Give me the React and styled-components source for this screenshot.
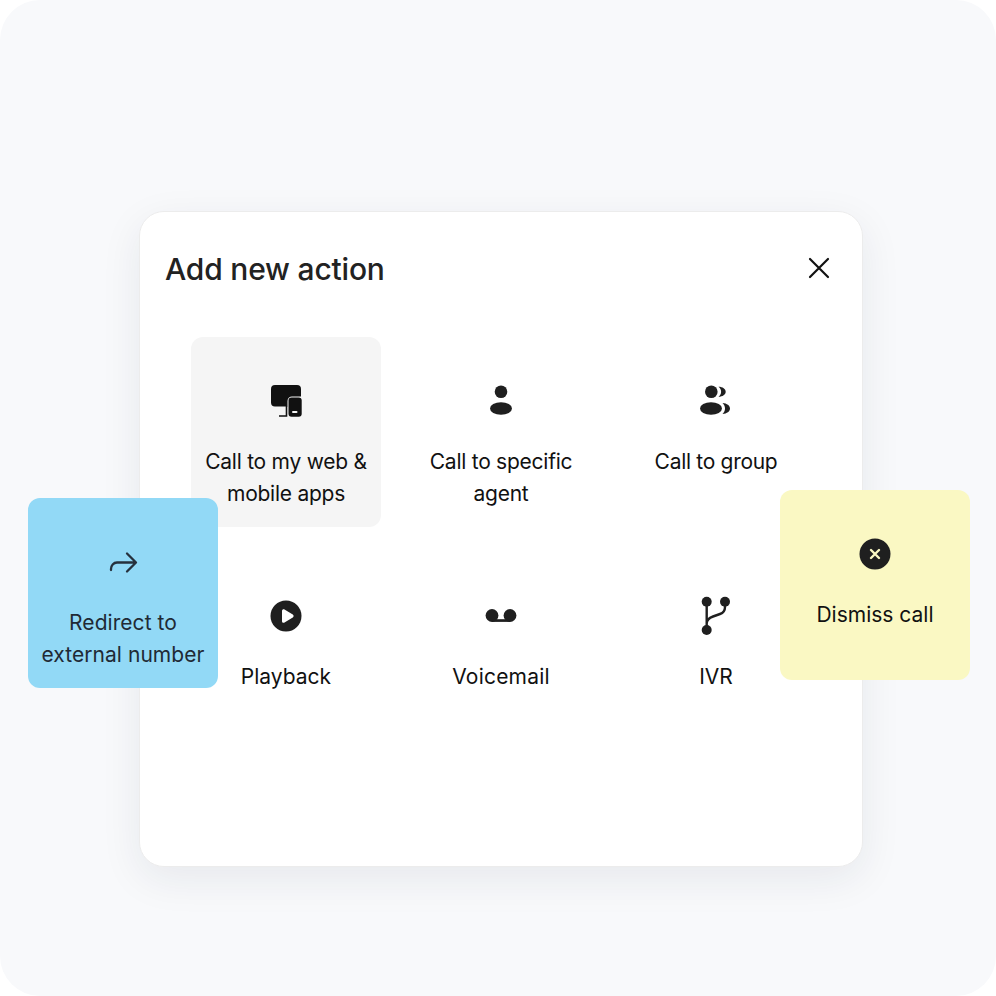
import React from "react";
import styled, { createGlobalStyle } from "styled-components";

const GlobalStyle = createGlobalStyle`
  html, body {
    margin: 0;
    padding: 0;
    background: #ffffff;
  }
  body {
    font-family: Inter, "Liberation Sans", sans-serif;
    color: #1f1f1f;
  }
`;

const Canvas = styled.div`
  position: relative;
  box-sizing: border-box;
  width: 996px;
  height: 996px;
  padding: 211px 133px 129px 139px;
  background: #f8f9fb;
  border-radius: 40px;
  overflow: hidden;
`;

const Modal = styled.div`
  box-sizing: border-box;
  width: 724px;
  height: 656px;
  padding: 37px 24px 0 25px;
  background: #ffffff;
  border: 1px solid #ececec;
  border-radius: 25px;
  box-shadow: 0 12px 40px rgba(30, 40, 60, 0.08);
`;

const Header = styled.div`
  display: flex;
  align-items: center;
  justify-content: space-between;
  height: 40px;
  padding-right: 3px;
`;

const Title = styled.h2`
  margin: 0;
  font-size: 30px;
  font-weight: 500;
  letter-spacing: -0.2px;
  color: #222222;
`;

const CloseButton = styled.button`
  display: flex;
  margin-bottom: 2px;
  padding: 0;
  border: 0;
  background: none;
  color: #111111;
`;

const ActionGrid = styled.div`
  display: grid;
  grid-template-columns: repeat(3, 190px);
  grid-auto-rows: 190px;
  column-gap: 25px;
  row-gap: 24px;
  margin: 48px 0 0 26px;
`;

const Tile = styled.div`
  box-sizing: border-box;
  display: flex;
  flex-direction: column;
  align-items: center;
  width: 190px;
  height: 190px;
  padding: ${(p) => p.$top || 48}px 8px 0;
  background: ${(p) => p.$bg || "transparent"};
  border-radius: 12px;
`;

const FloatingTile = styled(Tile)`
  position: absolute;
  left: ${(p) => p.$x}px;
  top: ${(p) => p.$y}px;
`;

const IconSlot = styled.div`
  display: flex;
  align-items: center;
  justify-content: center;
  width: 32px;
  height: 32px;
  color: ${(p) => p.$color || "#1f1f1f"};
`;

const Label = styled.div`
  margin-top: 29px;
  font-size: 21px;
  line-height: 32px;
  letter-spacing: ${(p) => p.$spacing || 0}px;
  text-align: center;
  white-space: nowrap;
  color: ${(p) => p.$color || "#111111"};
`;

const DevicesIcon = () => (
  <svg width="32" height="32" viewBox="0 0 32 32" fill="none">
    <path d="M1 4a4 4 0 0 1 4-4h22a4 4 0 0 1 4 4v7.500h-9a4.500 4.500 0 0 0-4.500 4.500v5.500H5a4 4 0 0 1-4-4z" fill="#111" />
    <path d="M16.500 21v10H9" stroke="#111" strokeWidth="1.600" />
    <rect x="18.500" y="12.500" width="13.200" height="19.200" rx="3" fill="#111" />
    <rect x="22" y="26" width="5.500" height="2" rx="1" fill="#f5f5f5" />
  </svg>
);

const AgentIcon = () => (
  <svg width="32" height="32" viewBox="0 0 32 32">
    <circle cx="16" cy="6.800" r="6.300" fill="currentColor" />
    <ellipse cx="16" cy="23.500" rx="11" ry="6.200" fill="currentColor" />
  </svg>
);

const GroupIcon = () => (
  <svg width="32" height="32" viewBox="0 0 32 32">
    <circle cx="11.300" cy="6.800" r="6.300" fill="currentColor" />
    <ellipse cx="11" cy="23.500" rx="11" ry="6.200" fill="currentColor" />
    <path d="M18.500 1.700c4.200 0 7.200 2.200 7.200 5s-3 5-7.200 5c1.700-1.400 2.600-3.100 2.600-5s-.9-3.600-2.600-5z" fill="currentColor" />
    <path d="M22.500 18c4.500.3 7.500 2.700 7.500 5.500s-3 5.200-7.500 5.500c1.600-1.500 2.500-3.400 2.500-5.500s-.9-4-2.500-5.500z" fill="currentColor" />
  </svg>
);

const PlayIcon = () => (
  <svg width="32" height="32" viewBox="0 0 32 32">
    <circle cx="16" cy="16" r="15.500" fill="currentColor" />
    <path d="M12 10.800c0-1.300 1.400-2 2.500-1.400l8.300 5.200c1.100.7 1.100 2.200 0 2.800l-8.300 5.200c-1.100.6-2.500-.1-2.500-1.400z" fill="#fff" />
  </svg>
);

const VoicemailIcon = () => (
  <svg width="32" height="32" viewBox="0 0 32 32">
    <circle cx="7" cy="15.500" r="6.400" fill="currentColor" />
    <circle cx="25" cy="15.500" r="6.400" fill="currentColor" />
    <rect x="7" y="19.200" width="18" height="2.700" fill="currentColor" />
  </svg>
);

const BranchIcon = () => (
  <svg width="32" height="40" viewBox="0 0 32 40" fill="none">
    <circle cx="6.700" cy="5.700" r="5" fill="currentColor" />
    <circle cx="25" cy="5.700" r="5" fill="currentColor" />
    <circle cx="6.700" cy="34" r="5" fill="currentColor" />
    <path d="M6.700 8v24M25 8v3c0 4-2 6-5 7l-7 2.500c-3 1-6.300 3-6.300 7" stroke="currentColor" strokeWidth="2.400" />
  </svg>
);

const RedirectIcon = () => (
  <svg width="32" height="32" viewBox="0 0 32 32" fill="none">
    <path d="M4 24v-1c0-3.500 2.500-6.500 6-6.500h18.500M20 7.500l9 9-9 9" stroke="currentColor" strokeWidth="2.300" strokeLinecap="round" strokeLinejoin="round" />
  </svg>
);

const DismissIcon = () => (
  <svg width="32" height="32" viewBox="0 0 32 32" fill="none">
    <circle cx="16" cy="16" r="15.500" fill="#1f1f1f" />
    <path d="M12 12l8 8M20 12l-8 8" stroke="#faf8c3" strokeWidth="2.400" strokeLinecap="round" />
  </svg>
);

const actions = [
  { icon: <DevicesIcon />, label: ["Call to my web &", "mobile apps"], bg: "#f5f5f5", spacing: -0.25 },
  { icon: <AgentIcon />, label: ["Call to specific", "agent"], spacing: -0.25 },
  { icon: <GroupIcon />, label: ["Call to group"], spacing: -0.3 },
  { icon: <PlayIcon />, label: ["Playback"], top: 49 },
  { icon: <VoicemailIcon />, label: ["Voicemail"], top: 49, spacing: 0.2 },
  { icon: <BranchIcon />, label: ["IVR"], top: 49 },
];

export default function App() {
  return (
    <>
      <GlobalStyle />
      <Canvas>
        <Modal>
          <Header>
            <Title>Add new action</Title>
            <CloseButton aria-label="Close">
              <svg width="32" height="32" viewBox="0 0 32 32" fill="none">
                <path d="M7 7l18 18M25 7L7 25" stroke="currentColor" strokeWidth="2.200" strokeLinecap="round" />
              </svg>
            </CloseButton>
          </Header>
          <ActionGrid>
            {actions.map((a) => (
              <Tile key={a.label[0]} $bg={a.bg} $top={a.top}>
                <IconSlot>{a.icon}</IconSlot>
                <Label $spacing={a.spacing}>
                  {a.label.map((line) => (
                    <div key={line}>{line}</div>
                  ))}
                </Label>
              </Tile>
            ))}
          </ActionGrid>
        </Modal>

        <FloatingTile $x={28} $y={498} $bg="#92d9f6" $top={48}>
          <IconSlot $color="#26313d">
            <RedirectIcon />
          </IconSlot>
          <Label $color="#1f2a35" $spacing={0.05}>
            <div>Redirect to</div>
            <div>external number</div>
          </Label>
        </FloatingTile>

        <FloatingTile $x={780} $y={490} $bg="#faf8c3" $top={48}>
          <IconSlot>
            <DismissIcon />
          </IconSlot>
          <Label>Dismiss call</Label>
        </FloatingTile>
      </Canvas>
    </>
  );
}
